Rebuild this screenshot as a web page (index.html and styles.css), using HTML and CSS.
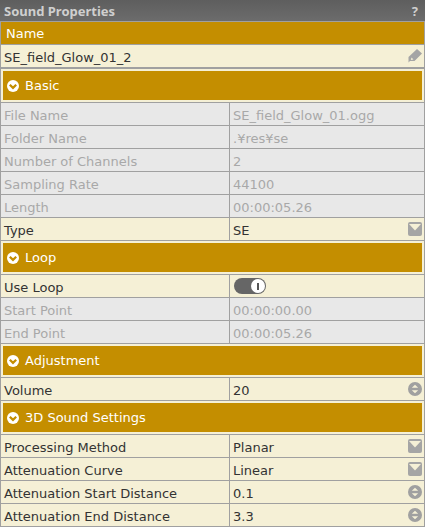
FILE: index.html
```html
<!DOCTYPE html>
<html lang="en">

<head>
    <meta charset="UTF-8">
    <meta name="viewport" content="width=device-width, initial-scale=1.0">
    <title>Sound Properties</title>
    <link rel="stylesheet" href="styles.css">
</head>

<body>
    <svg class="sprites" width="0" height="0">
        <symbol id="chevron" viewBox="0 0 12 12">
            <circle cx="6" cy="6" r="6" fill="#fff" />
            <path d="M2.8 4.7 6 7.9 9.2 4.7" fill="none" stroke="#c48e00" stroke-width="2.2" />
        </symbol>
        <symbol id="dropdown" viewBox="0 0 14 14">
            <rect width="14" height="14" rx="2" fill="#a5a5a5" />
            <path d="M1 2H13L7 8.5Z" fill="#f5f0d6" />
        </symbol>
        <symbol id="spinner" viewBox="0 0 14 14">
            <circle cx="7" cy="7" r="7" fill="#a0a0a0" />
            <path d="M3.8 5.8 7 2.8 10.2 5.8ZM3.8 8.2 7 11.2 10.2 8.2Z" fill="#f5f0d6" />
        </symbol>
    </svg>

    <div class="panel">
        <div class="title">
            <span>Sound Properties</span>
            <span class="help">?</span>
        </div>
        <div class="name-head">Name</div>
        <div class="name-row">
            <span>SE_field_Glow_01_2</span>
            <svg class="pencil" width="14" height="14" viewBox="0 0 14 14">
                <path d="M9 0 14 4.5 6.5 12H2L0.5 13.5V8ZM3.5 8.5 2.8 11 5.5 10.4Z" fill="#a5a5a5" fill-rule="evenodd" />
            </svg>
        </div>

        <div class="section first"><div class="section-bar"><svg class="chev"><use href="#chevron" /></svg>Basic</div></div>
        <div class="row off"><div class="key">File Name</div><div class="val">SE_field_Glow_01.ogg</div></div>
        <div class="row off"><div class="key">Folder Name</div><div class="val">.¥res¥se</div></div>
        <div class="row off"><div class="key">Number of Channels</div><div class="val">2</div></div>
        <div class="row off"><div class="key">Sampling Rate</div><div class="val">44100</div></div>
        <div class="row off"><div class="key">Length</div><div class="val">00:00:05.26</div></div>
        <div class="row"><div class="key">Type</div><div class="val">SE<svg class="ctl"><use href="#dropdown" /></svg></div></div>

        <div class="section"><div class="section-bar"><svg class="chev"><use href="#chevron" /></svg>Loop</div></div>
        <div class="row"><div class="key">Use Loop</div><div class="val"><span class="toggle"><span class="knob"></span></span></div></div>
        <div class="row off"><div class="key">Start Point</div><div class="val">00:00:00.00</div></div>
        <div class="row off"><div class="key">End Point</div><div class="val">00:00:05.26</div></div>

        <div class="section"><div class="section-bar"><svg class="chev"><use href="#chevron" /></svg>Adjustment</div></div>
        <div class="row"><div class="key">Volume</div><div class="val">20<svg class="ctl"><use href="#spinner" /></svg></div></div>

        <div class="section"><div class="section-bar"><svg class="chev"><use href="#chevron" /></svg>3D Sound Settings</div></div>
        <div class="row"><div class="key">Processing Method</div><div class="val">Planar<svg class="ctl"><use href="#dropdown" /></svg></div></div>
        <div class="row"><div class="key">Attenuation Curve</div><div class="val">Linear<svg class="ctl"><use href="#dropdown" /></svg></div></div>
        <div class="row"><div class="key">Attenuation Start Distance</div><div class="val">0.1<svg class="ctl"><use href="#spinner" /></svg></div></div>
        <div class="row"><div class="key">Attenuation End Distance</div><div class="val">3.3<svg class="ctl"><use href="#spinner" /></svg></div></div>
    </div>
</body>

</html>
```

FILE: styles.css
```css
html,
body {
    margin: 0;
    padding: 0;
    background-color: #a0a0a0;
}

body {
    font-family: "DejaVu Sans", Verdana, sans-serif;
    font-size: 13px;
    color: #3a3a3a;
    overflow: hidden;
}

.sprites {
    display: block;
    height: 0;
}

.panel {
    display: flex;
    flex-direction: column;
    width: 425px;
    height: 527px;
    background-color: #a0a0a0;
}

.title {
    display: flex;
    justify-content: space-between;
    align-items: center;
    height: 21px;
    padding: 0 7px 0 4px;
    background: linear-gradient(#5e5e5e, #6c6c6c);
    color: #cfcfcf;
    font-weight: bold;
    font-family: "Noto Sans", sans-serif;
    font-size: 13px;
}

.name-head {
    display: flex;
    align-items: center;
    height: 22px;
    margin: 1px 1px 0;
    padding-left: 5px;
    background-color: #c48e00;
    color: #fff;
}

.name-row {
    display: flex;
    justify-content: space-between;
    align-items: center;
    height: 22px;
    margin: 1px 1px 1px;
    padding: 2px 2px 0 3px;
    box-sizing: border-box;
    background-color: #f5f0d6;
    color: #333;
}

.pencil {
    margin-top: -2px;
}

.section {
    margin: 0 1px 1px;
    padding: 2px;
    background-color: #f5f0d6;
}

.section.first {
    margin-top: 1px;
}

.section-bar {
    display: flex;
    align-items: center;
    gap: 6px;
    height: 29px;
    padding-left: 4px;
    background-color: #c48e00;
    color: #fff;
}

.chev {
    width: 12px;
    height: 12px;
}

.row {
    display: grid;
    grid-template-columns: 228px 1fr;
    gap: 1px;
    height: 22px;
    margin: 0 1px 1px;
}

.key,
.val {
    display: flex;
    align-items: center;
    box-sizing: border-box;
    padding-top: 2px;
    background-color: #f5f0d6;
    color: #333;
}

.key {
    padding-left: 3px;
}

.val {
    justify-content: space-between;
    padding-left: 3px;
    padding-right: 2px;
}

.off .key,
.off .val {
    background-color: #e8e8e8;
    color: #a8a8a8;
}

.ctl {
    width: 14px;
    height: 14px;
    margin-top: -2px;
}

.toggle {
    display: flex;
    justify-content: flex-end;
    align-items: center;
    width: 32px;
    height: 16px;
    margin: -2px 0 0 1px;
    border-radius: 8px;
    background-color: #666;
}

.knob {
    display: flex;
    justify-content: center;
    align-items: center;
    width: 14px;
    height: 14px;
    margin-right: 1px;
    border-radius: 50%;
    background-color: #fff;
}

.knob::after {
    content: "";
    width: 2px;
    height: 7px;
    background-color: #555;
}
```
